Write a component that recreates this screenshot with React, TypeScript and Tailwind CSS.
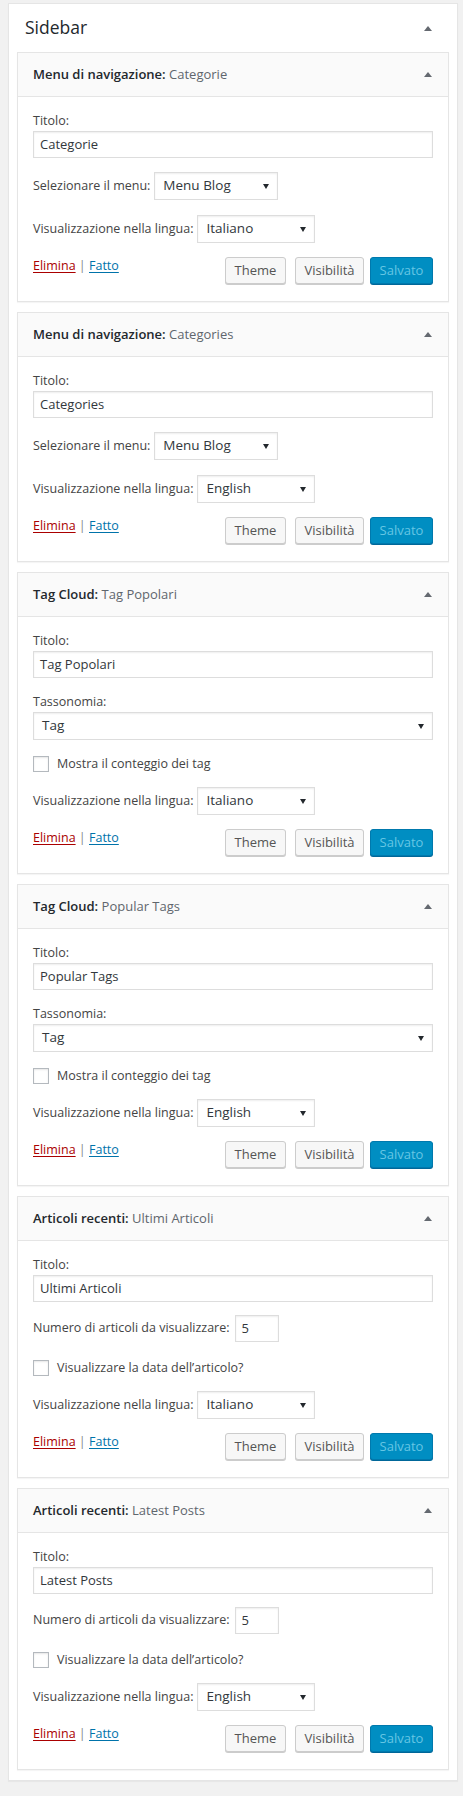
import React from "react";

type Widget = {
  kind: "nav" | "tag" | "recent";
  name: string;
  title: string;
  lang: string;
};

const widgets: Widget[] = [
  { kind: "nav", name: "Menu di navigazione:", title: "Categorie", lang: "Italiano" },
  { kind: "nav", name: "Menu di navigazione:", title: "Categories", lang: "English" },
  { kind: "tag", name: "Tag Cloud:", title: "Tag Popolari", lang: "Italiano" },
  { kind: "tag", name: "Tag Cloud:", title: "Popular Tags", lang: "English" },
  { kind: "recent", name: "Articoli recenti:", title: "Ultimi Articoli", lang: "Italiano" },
  { kind: "recent", name: "Articoli recenti:", title: "Latest Posts", lang: "English" },
];

function UpArrow() {
  return (
    <svg width="8" height="5" viewBox="0 0 8 5" className="block">
      <polygon points="4,0 8,5 0,5" fill="#646970" />
    </svg>
  );
}

function DownArrow() {
  return (
    <svg width="6" height="5" viewBox="0 0 6 5" className="block">
      <polygon points="0,0 6,0 3,5" fill="#23282d" />
    </svg>
  );
}

function Select({ value, width }: { value: string; width?: string }) {
  return (
    <div
      className={`flex h-[28px] items-center justify-between border border-[#ddd] bg-white pl-[8px] pr-[8px] text-[#32373c] shadow-[inset_0_1px_2px_rgba(0,0,0,0.07)] ${
        width ?? "w-full"
      }`}
    >
      <span className="text-[13.5px] leading-none">{value}</span>
      <DownArrow />
    </div>
  );
}

function TextInput({ value, width }: { value: string; width?: string }) {
  return (
    <div
      className={`flex h-[27px] items-center border border-[#ddd] bg-white px-[6px] text-[13px] text-[#32373c] shadow-[inset_0_1px_2px_rgba(0,0,0,0.07)] ${
        width ?? "w-full"
      }`}
    >
      {value}
    </div>
  );
}

function Checkbox({ label }: { label: string }) {
  return (
    <div className="flex h-[16px] items-center">
      <div className="h-[16px] w-[16px] border border-[#b4b9be] bg-white shadow-[inset_0_1px_2px_rgba(0,0,0,0.1)]" />
      <span className="ml-[8px] text-[#444]">{label}</span>
    </div>
  );
}

function LangRow({ lang }: { lang: string }) {
  return (
    <div className="flex items-center">
      <span className="text-[#444]">Visualizzazione nella lingua:</span>
      <div className="ml-[4px]">
        <Select value={lang} width="w-[118px]" />
      </div>
    </div>
  );
}

function Actions() {
  return (
    <div className="flex h-[28px] items-start justify-between">
      <div className="leading-[18px]">
        <a className="text-[#a00] underline decoration-1 underline-offset-[2px]">Elimina</a>
        <span className="text-[#82878c]"> | </span>
        <a className="text-[#0073aa] underline decoration-1 underline-offset-[2px]">Fatto</a>
      </div>
      <div className="flex items-start">
        <div className="flex h-[27px] w-[61px] items-center justify-center rounded-[3px] border border-[#ccc] bg-[#f7f7f7] text-[13px] text-[#555] shadow-[0_1px_0_#ccc]">
          Theme
        </div>
        <div className="ml-[9px] flex h-[27px] w-[69px] items-center justify-center rounded-[3px] border border-[#ccc] bg-[#f7f7f7] text-[13px] text-[#555] shadow-[0_1px_0_#ccc]">
          Visibilità
        </div>
        <div className="ml-[6px] flex h-[27px] w-[63px] items-center justify-center rounded-[3px] border border-[#0079ad] bg-[#008ec2] text-[13px] text-[#66c6e4] shadow-[0_1px_0_#006799]">
          Salvato
        </div>
      </div>
    </div>
  );
}

function WidgetBox({ w }: { w: Widget }) {
  return (
    <div className="border border-[#e5e5e5] bg-white shadow-[0_1px_1px_rgba(0,0,0,0.04)]">
      <div className="flex h-[44px] items-center justify-between border-b border-[#e5e5e5] bg-[#fafafa] pl-[15px] pr-[16px]">
        <div className="text-[13px] text-[#23282d]">
          <span className="font-semibold">{w.name}</span>{" "}
          <span className="text-[#5f666d]">{w.title}</span>
        </div>
        <UpArrow />
      </div>
      <div className="px-[15px] pt-[14px] pb-[16px]">
        <div className="h-[20px] leading-[20px] text-[#444]">Titolo:</div>
        <TextInput value={w.title} />

        {w.kind === "nav" && (
          <>
            <div className="mt-[14px] flex items-center">
              <span className="text-[#444]">Selezionare il menu:</span>
              <div className="ml-[4px]">
                <Select value="Menu Blog" width="w-[124px]" />
              </div>
            </div>
            <div className="mt-[15px]">
              <LangRow lang={w.lang} />
            </div>
          </>
        )}

        {w.kind === "tag" && (
          <>
            <div className="mt-[14px] h-[20px] leading-[20px] text-[#444]">Tassonomia:</div>
            <Select value="Tag" />
            <div className="mt-[16px]">
              <Checkbox label="Mostra il conteggio dei tag" />
            </div>
            <div className="mt-[15px]">
              <LangRow lang={w.lang} />
            </div>
          </>
        )}

        {w.kind === "recent" && (
          <>
            <div className="mt-[13px] flex items-center">
              <span className="text-[#444]">Numero di articoli da visualizzare:</span>
              <div className="ml-[5px]">
                <TextInput value="5" width="w-[44px]" />
              </div>
            </div>
            <div className="mt-[18px]">
              <Checkbox label="Visualizzare la data dell’articolo?" />
            </div>
            <div className="mt-[15px]">
              <LangRow lang={w.lang} />
            </div>
          </>
        )}

        <div className="mt-[14px]">
          <Actions />
        </div>
      </div>
    </div>
  );
}

export default function App() {
  return (
    <div className="min-h-screen bg-[#f1f1f1] pt-[3px] pb-[10px] pl-[8px] font-['Open_Sans',sans-serif] text-[12.5px] text-[#444]">
      <div className="w-[450px] border border-[#e5e5e5] bg-white px-[8px] pb-[10px] shadow-[0_1px_1px_rgba(0,0,0,0.04)]">
        <div className="flex h-[48px] items-center justify-between">
          <h2 className="ml-[8px] text-[17.5px] font-normal leading-none text-[#23282d]">Sidebar</h2>
          <div className="mr-[17px]">
            <UpArrow />
          </div>
        </div>
        <div className="flex flex-col gap-[10px]">
          {widgets.map((w, i) => (
            <WidgetBox key={i} w={w} />
          ))}
        </div>
      </div>
    </div>
  );
}
